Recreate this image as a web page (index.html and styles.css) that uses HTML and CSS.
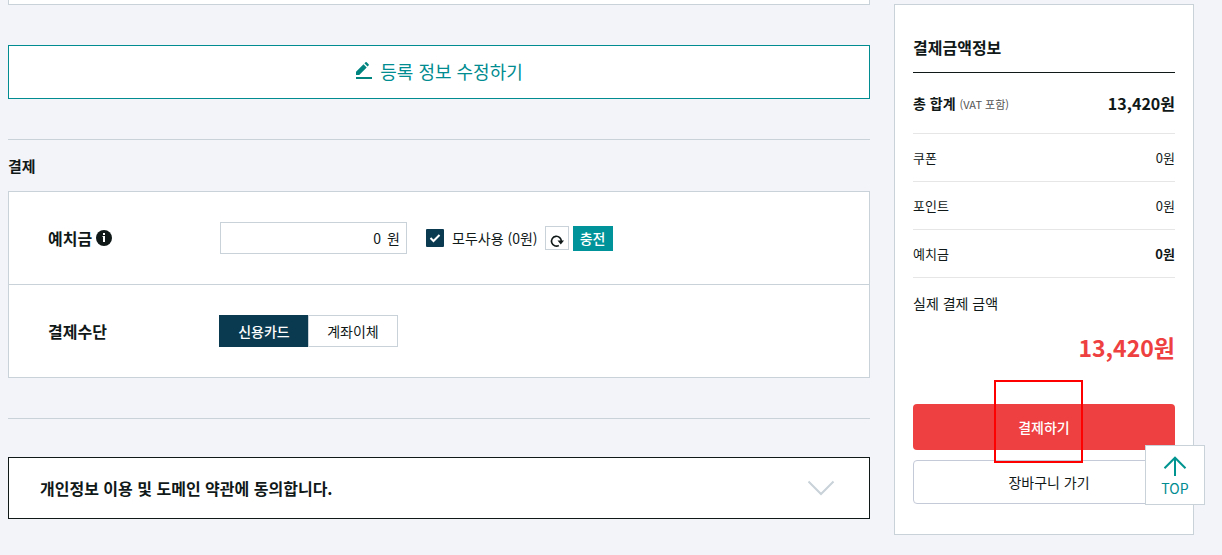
FILE: index.html
```html
<!DOCTYPE html>
<html lang="ko">
<head>
<meta charset="utf-8">
<meta name="viewport" content="width=device-width, initial-scale=1">
<title>결제</title>
<link rel="stylesheet" href="styles.css">
</head>
<body>
<div class="page">
  <main class="content">
    <div class="prev-card"></div>
    <button type="button" class="edit-button">
      <svg class="edit-icon" width="18" height="18" viewBox="0 0 18 18" aria-hidden="true"><path fill="currentColor" d="M1 15h16v2H1zM1 9.700 8.500 2.200l3.200 3.200-7.500 7.500H1zM9.400 1.300 10.500.3q.6-.6 1.200 0l1.900 1.900q.6.600 0 1.200l-1.100 1.100z"/></svg>
      <span>등록 정보 수정하기</span>
    </button>
    <section class="payment">
      <h2 class="section-title">결제</h2>
      <div class="card">
        <div class="row">
          <div class="row-label">
            <label for="deposit">예치금</label>
            <svg width="16" height="16" viewBox="0 0 16 16" aria-hidden="true"><circle cx="8" cy="8" r="8" fill="#101818"/><path fill="#fff" d="M7 3h2v2H7zM6.500 6H9v6H7V7h-.5z"/></svg>
          </div>
          <div class="deposit-field">
            <input id="deposit" class="deposit-input" type="text" value="0">
            <span>원</span>
          </div>
          <label class="use-all">
            <span class="check">
              <input class="check-input" type="checkbox" checked>
              <svg class="check-mark" width="18" height="18" viewBox="0 0 18 18" aria-hidden="true"><path d="M4.500 9l3 3 6-6" fill="none" stroke="#fff" stroke-width="2"/></svg>
            </span>
            <span>모두사용 (0원)</span>
          </label>
          <button type="button" class="refresh" aria-label="새로고침">
            <svg width="14" height="14" viewBox="0 0 14 14" aria-hidden="true"><path d="M8.800 11.500A4.900 4.900 0 1 1 11.300 7.500" fill="none" stroke="#101818" stroke-width="1.600"/><path d="M7.500 6.500H14l-3.200 4z" fill="#101818"/></svg>
          </button>
          <button type="button" class="charge">충전</button>
        </div>
        <div class="row">
          <div class="row-label">결제수단</div>
          <div class="methods">
            <button type="button" class="method method-active">신용카드</button>
            <button type="button" class="method">계좌이체</button>
          </div>
        </div>
      </div>
    </section>
    <section class="agreement">
      <button type="button" class="agree-button">
        <span>개인정보 이용 및 도메인 약관에 동의합니다.</span>
        <svg width="28" height="16" viewBox="0 0 28 16" aria-hidden="true"><path d="M1.500 1.500 14 14 26.500 1.500" fill="none" stroke="#c8d2d8" stroke-width="2"/></svg>
      </button>
    </section>
  </main>
  <aside class="summary">
    <h2 class="summary-title">결제금액정보</h2>
    <dl class="lines">
      <div class="line line-total"><dt>총 합계 <small class="vat">(VAT 포함)</small></dt><dd>13,420원</dd></div>
      <div class="line"><dt>쿠폰</dt><dd>0원</dd></div>
      <div class="line"><dt>포인트</dt><dd>0원</dd></div>
      <div class="line"><dt>예치금</dt><dd class="strong">0원</dd></div>
    </dl>
    <p class="final-label">실제 결제 금액</p>
    <p class="final-price">13,420원</p>
    <div class="pay-wrap">
      <button type="button" class="pay">결제하기</button>
      <span class="highlight"></span>
    </div>
    <button type="button" class="cart">장바구니 가기</button>
  </aside>
</div>
<a class="top-link" href="#">
  <svg width="24" height="20" viewBox="0 0 24 20" aria-hidden="true"><path d="M12 20V2M1.500 12.200 12 1.700l10.500 10.500" fill="none" stroke="#009490" stroke-width="2"/></svg>
  <span>TOP</span>
</a>
</body>
</html>
```
FILE: styles.css
```css
* {
  box-sizing: border-box;
}

body,
h2,
p,
dl,
dd {
  margin: 0;
}

body {
  background: #f3f4f9;
  color: #101818;
  font-family: "Noto Sans CJK KR", sans-serif;
  font-size: 14px;
  line-height: 20px;
}

button,
input {
  font: inherit;
  color: inherit;
}

button {
  padding: 0;
  cursor: pointer;
}

svg {
  display: block;
  flex: none;
}

.page {
  display: flex;
  align-items: flex-start;
  gap: 24px;
  padding: 0 28px 20px 8px;
}

.content {
  flex: 1;
  min-width: 0;
}

.prev-card {
  height: 5px;
  margin-bottom: 40px;
  background: #fff;
  border: 1px solid #c8d2d8;
  border-top: 0;
}

.edit-button {
  display: flex;
  align-items: center;
  justify-content: center;
  gap: 7px;
  width: 100%;
  height: 54px;
  padding-bottom: 2px;
  background: #fff;
  border: 1px solid #008c90;
  color: #008c90;
  font-size: 18px;
}

.edit-icon {
  color: #008480;
}

.payment,
.agreement {
  margin-top: 40px;
  border-top: 1px solid #c8d2d8;
}

.section-title {
  padding: 16px 0 15px;
  font-size: 15px;
  line-height: 20px;
  font-weight: 700;
}

.card {
  background: #fff;
  border: 1px solid #c8d2d8;
}

.row {
  display: flex;
  align-items: center;
  height: 92px;
  padding-left: 39px;
}

.row + .row {
  height: 93px;
  border-top: 1px solid #c8d2d8;
}

.row-label {
  display: flex;
  align-items: center;
  gap: 4px;
  width: 171px;
  font-size: 16px;
  font-weight: 700;
}

.deposit-field {
  display: flex;
  align-items: center;
  gap: 6px;
  width: 187px;
  height: 32px;
  margin-left: 1px;
  padding-right: 6px;
  border: 1px solid #c8d2d8;
}

.deposit-input {
  flex: 1;
  min-width: 0;
  padding: 0;
  border: 0;
  outline: 0;
  background: none;
  text-align: right;
}

.use-all {
  display: flex;
  align-items: center;
  gap: 8px;
  margin: 0 7px 0 19px;
}

.check {
  display: grid;
}

.check-input,
.check-mark {
  grid-area: 1 / 1;
}

.check-input {
  appearance: none;
  width: 18px;
  height: 18px;
  margin: 0;
  border-radius: 1px;
  background: #0a3a50;
}

.check-mark {
  pointer-events: none;
  visibility: hidden;
}

.check-input:checked + .check-mark {
  visibility: visible;
}

.refresh {
  display: grid;
  place-items: center;
  width: 24px;
  height: 24px;
  padding-top: 5px;
  background: #fff;
  border: 1px solid #c8d2d8;
}

.charge {
  width: 40px;
  height: 25px;
  margin-left: 4px;
  border: 0;
  background: #00949a;
  color: #fff;
  font-weight: 500;
}

.methods {
  display: flex;
}

.method {
  width: 90px;
  height: 32px;
  background: #fff;
  border: 1px solid #c8d2d8;
}

.method + .method {
  margin-left: -1px;
}

.method-active {
  background: #0a3a50;
  border-color: #0a3a50;
  color: #fff;
  font-weight: 500;
}

.agree-button {
  display: flex;
  align-items: center;
  justify-content: space-between;
  width: 100%;
  height: 62px;
  margin-top: 38px;
  padding: 0 34px 0 31px;
  background: #fff;
  border: 1px solid #101818;
  font-size: 16px;
  font-weight: 700;
}

.summary {
  width: 300px;
  margin-top: 4px;
  padding: 32px 18px 30px;
  background: #fff;
  border: 1px solid #c8d2d8;
}

.summary-title {
  padding-bottom: 15px;
  border-bottom: 1px solid #101818;
  font-size: 16px;
  line-height: 20px;
  font-weight: 700;
}

.line {
  display: flex;
  align-items: center;
  justify-content: space-between;
  height: 48px;
  border-bottom: 1px solid #e6e6e6;
  font-size: 13px;
}

.line-total {
  height: 61px;
  font-size: 14px;
  font-weight: 700;
}

.line-total dd {
  font-size: 16px;
}

.vat {
  color: #555;
  font-size: 11px;
  font-weight: 400;
}

.strong {
  font-weight: 700;
}

.final-label {
  margin-top: 15px;
}

.final-price {
  margin-top: 18px;
  color: #ee4040;
  font-size: 23px;
  line-height: 32px;
  font-weight: 700;
  text-align: right;
}

.pay-wrap {
  position: relative;
  margin: 41px 0 10px;
}

.pay,
.cart {
  display: block;
  width: 100%;
  border-radius: 4px;
}

.pay {
  height: 46px;
  border: 0;
  background: #ee4040;
  color: #fff;
  font-weight: 500;
}

.cart {
  height: 44px;
  padding-left: 10px;
  background: #fff;
  border: 1px solid #c4cad8;
}

.highlight {
  position: absolute;
  top: -24px;
  left: 81px;
  width: 89px;
  height: 83px;
  border: 2px solid #f00;
  pointer-events: none;
}

.top-link {
  position: fixed;
  right: 17px;
  bottom: 50px;
  display: flex;
  flex-direction: column;
  align-items: center;
  gap: 2px;
  width: 60px;
  height: 60px;
  padding-top: 10px;
  background: #fff;
  border: 1px solid #c8d2d8;
  color: #008c90;
  text-decoration: none;
}
```
